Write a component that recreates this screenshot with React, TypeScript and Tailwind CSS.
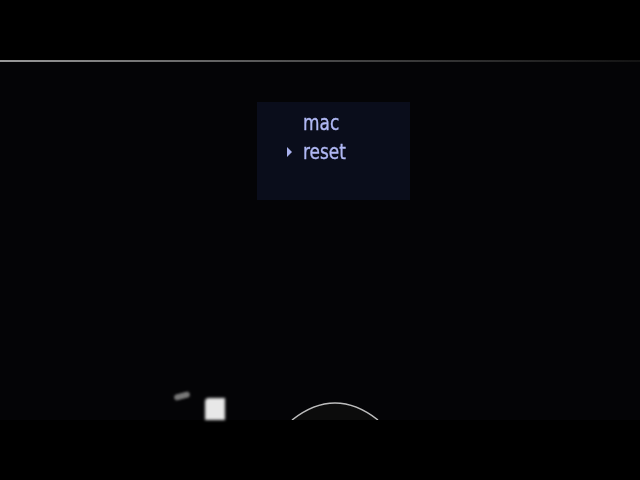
import React from "react";

const menuItems = [
  { label: "mac", selected: false },
  { label: "reset", selected: true },
];

export default function App() {
  return (
    <div className="w-[640px] h-[480px] bg-black flex flex-col overflow-hidden">
      {/* letterbox top */}
      <div className="h-[60px] bg-black" />

      {/* screen area */}
      <div className="relative h-[360px] bg-[#040406]">
        {/* top edge glint */}
        <div className="h-[2px] bg-gradient-to-r from-[#9a9a9a] via-[#4a4a4a] to-[#141414]" />

        <div className="pl-[257px] pt-[40px]">
          <div className="w-[153px] h-[98px] bg-[#0a0d1b] pt-[6px]">
            {menuItems.map((item) => (
              <div key={item.label} className="flex items-center h-[29px]">
                <div className="w-[46px] flex justify-end pr-[11px]">
                  {item.selected && (
                    <span className="block w-0 h-0 border-y-[5px] border-y-transparent border-l-[5px] border-l-[#a9b1ee]" />
                  )}
                </div>
                <span
                  className="inline-block origin-left scale-x-[0.77] text-[22px] leading-none text-[#b0b8f4] [-webkit-text-stroke:0.4px_#b0b8f4]"
                  style={{ fontFamily: '"DejaVu Sans", sans-serif' }}
                >
                  {item.label}
                </span>
              </div>
            ))}
          </div>
        </div>

        {/* reflections at the bottom */}
        <div className="absolute left-[174px] top-[333px] w-[16px] h-[6px] rounded-full bg-[#777] rotate-[-15deg] blur-[1px]" />
        <div className="absolute left-[205px] top-[338px] w-[20px] h-[22px] bg-[#e8e8e8] rounded-tl-sm blur-[1.5px]" />
        <svg className="absolute left-[290px] top-[340px]" width="90" height="20" viewBox="0 0 90 20">
          <path d="M2 20 Q45 -14 88 20" fill="#0c0c0c" stroke="#bdbdbd" strokeWidth="1.5" />
        </svg>
      </div>

      {/* letterbox bottom */}
      <div className="flex-1 bg-black" />
    </div>
  );
}
